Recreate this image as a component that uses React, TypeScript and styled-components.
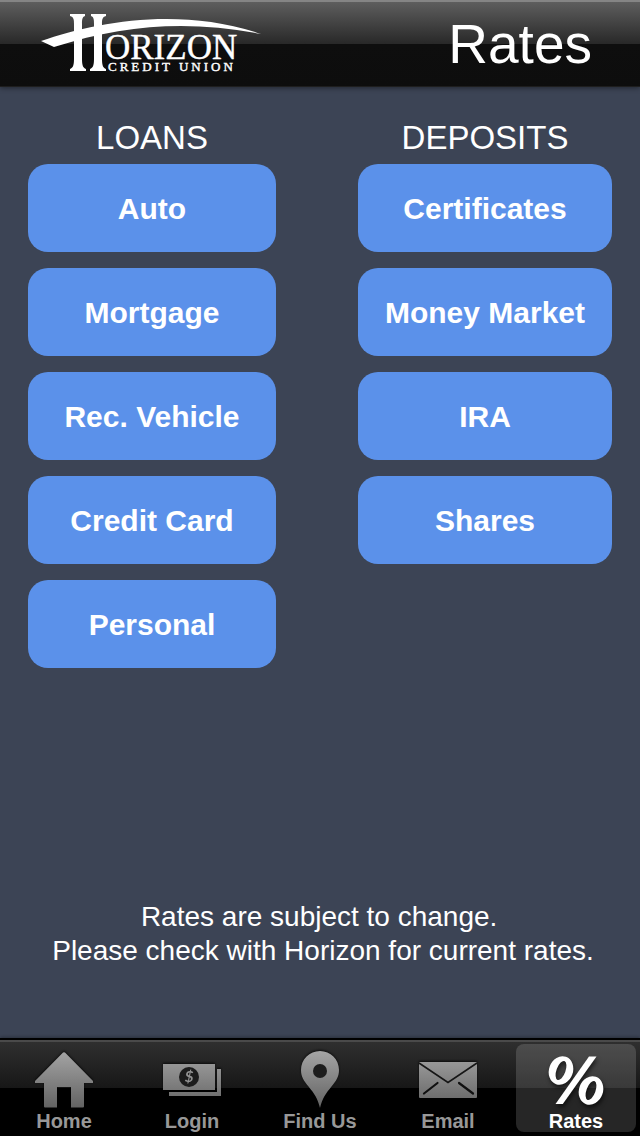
import React from 'react';
import styled, { createGlobalStyle, css } from 'styled-components';

const GlobalStyle = createGlobalStyle`
  *, *::before, *::after {
    box-sizing: border-box;
  }
  body {
    margin: 0;
    background: #3c4455;
    color: #ffffff;
    font-family: "Liberation Sans", Arial, Helvetica, sans-serif;
  }
`;

const Screen = styled.div`
  display: flex;
  flex-direction: column;
  min-height: 100vh;
`;

const Header = styled.header`
  display: flex;
  align-items: center;
  justify-content: space-between;
  height: 87px;
  padding: 0 48px 0 40px;
  border-top: 2px solid #858585;
  border-bottom: 1px solid #1e1e1e;
  background: linear-gradient(#5e5e5e 0, #282828 50%, #0e0e0e 50%, #0d0d0d 100%);
  box-shadow: 0 1px 5px rgba(0, 0, 0, 0.45);
`;

const Logo = styled.svg`
  display: block;
  width: 224px;
  height: 64px;
  fill: #ffffff;
`;

const LogoName = styled.text`
  font-family: "Liberation Serif", "Times New Roman", serif;
  font-size: 35px;
  stroke: #ffffff;
  stroke-width: 0.4;
`;

const LogoTagline = styled.text`
  font-family: "Liberation Serif", "Times New Roman", serif;
  font-size: 13px;
  letter-spacing: 3px;
  stroke: #ffffff;
  stroke-width: 0.4;
`;

const Title = styled.h1`
  margin: 0;
  font-size: 55px;
  line-height: 80px;
  font-weight: 400;
`;

const Main = styled.main`
  display: flex;
  flex: 1;
  flex-direction: column;
  justify-content: space-between;
  padding: 28px 28px 70px;
`;

const Columns = styled.div`
  display: grid;
  grid-template-columns: 248fr 254fr;
  column-gap: 82px;
  align-items: start;
`;

const Column = styled.section`
  display: flex;
  flex-direction: column;
  gap: 16px;
`;

const ColumnTitle = styled.h2`
  margin: 0 0 -12px;
  font-size: 33px;
  line-height: 45px;
  font-weight: 400;
  text-align: center;
`;

const RateButton = styled.button`
  height: 88px;
  padding: 2px 8px 0;
  border: 0;
  border-radius: 20px;
  background: #5b91ea;
  color: #ffffff;
  font-family: inherit;
  font-size: 30px;
  font-weight: 700;
  line-height: 36px;
  white-space: nowrap;
  cursor: pointer;
`;

const Note = styled.p`
  margin: 32px 0 0;
  padding-left: 6px;
  font-size: 28px;
  line-height: 34px;
  text-align: center;
`;

const TabBar = styled.nav`
  display: flex;
  height: 98px;
  border-top: 2px solid #000000;
  background: linear-gradient(#4a4a4a 0, #4a4a4a 2px, #2f2f2f 2px, #171717 48px, #000000 48px);
  box-shadow: 0 -1px 3px rgba(0, 0, 0, 0.3);
`;

const Tab = styled.a<{ $active?: boolean }>`
  display: flex;
  flex: 1 1 0;
  flex-direction: column;
  align-items: center;
  margin: 4px;
  padding-top: 6px;
  border-radius: 8px;
  color: #989898;
  font-size: 20px;
  font-weight: 700;
  line-height: 22px;
  text-decoration: none;
  white-space: nowrap;
  ${({ $active }) =>
    $active &&
    css`
      background: rgba(255, 255, 255, 0.15);
      color: #ffffff;
    `}
`;

const TabIcon = styled.svg`
  display: block;
  flex: none;
  width: 64px;
  height: 60px;
  filter: drop-shadow(0 -1px 1px rgba(0, 0, 0, 0.7));
`;

const PercentIcon = styled(TabIcon)`
  filter: drop-shadow(1px 3px 2px rgba(0, 0, 0, 0.6));
`;

const IconFill = ({ id }: { id: string }) => (
  <defs>
    <linearGradient id={id} gradientUnits="userSpaceOnUse" x1="0" y1="0" x2="0" y2="60">
      <stop offset="0" stopColor="#a6a6a6" />
      <stop offset="1" stopColor="#606060" />
    </linearGradient>
  </defs>
);

const HomeIcon = () => (
  <TabIcon viewBox="0 0 64 60" aria-hidden="true">
    <IconFill id="home-fill" />
    <path
      fill="url(#home-fill)"
      d="M31 2.600q1-.9 2 0L61 31v2H52V56.500q0 1-1 1H39V37H25V57.500H13q-1 0-1-1V33H3V31Z"
    />
  </TabIcon>
);

const LoginIcon = () => (
  <TabIcon viewBox="0 0 64 60" aria-hidden="true">
    <IconFill id="login-fill" />
    <path fill="url(#login-fill)" d="M3 14H55V40H3ZM57 19H61V46H9V42H57Z" />
    <circle cx="29" cy="27" r="10" fill="#1c1c1c" />
    <text
      x="29"
      y="32"
      textAnchor="middle"
      fill="#929292"
      fontFamily="Lato, sans-serif"
      fontSize="15"
      fontWeight="700"
      fontStyle="italic"
    >
      $
    </text>
  </TabIcon>
);

const FindIcon = () => (
  <TabIcon viewBox="0 0 64 60" aria-hidden="true">
    <IconFill id="find-fill" />
    <path
      fill="url(#find-fill)"
      d="M32 1C42.500 1 51 9.500 51 20C51 27 48 31 43.500 36.500C37.500 44 34.500 48 32 58C29.500 48 26.500 44 20.500 36.500C16 31 13 27 13 20C13 9.500 21.500 1 32 1Z"
    />
    <circle cx="32" cy="21" r="7" fill="#1d1d1d" />
  </TabIcon>
);

const EmailIcon = () => (
  <TabIcon viewBox="0 0 64 60" aria-hidden="true">
    <IconFill id="email-fill" />
    <rect x="3" y="12" width="58" height="36" rx="1" fill="url(#email-fill)" />
    <path d="M3 13L32 32.500L61 13" fill="none" stroke="#161616" strokeWidth="1.600" />
    <path
      d="M8 43.500L21.500 33M43 33L57 43.500"
      fill="none"
      stroke="#101010"
      strokeWidth="2.200"
      strokeLinecap="round"
    />
  </TabIcon>
);

const ring =
  'M-12 0A12 14.500 0 1 1 12 0A12 14.500 0 1 1-12 0ZM-4.500 0A4.500 10 0 1 0 4.500 0A4.500 10 0 1 0-4.500 0Z';

const RatesIcon = () => (
  <PercentIcon viewBox="0 0 64 60" aria-hidden="true" fill="#ffffff">
    <path d="M45 6.500H52.500L18.800 54H11.500Z" />
    <path d={ring} fillRule="evenodd" transform="translate(17 20.500) rotate(20)" />
    <path d={ring} fillRule="evenodd" transform="translate(47 40.500) rotate(20)" />
  </PercentIcon>
);

const HorizonLogo = () => (
  <Logo viewBox="0 0 224 64" role="img" aria-label="Horizon Credit Union">
    <path d="M1 29C55 10 140-6 221 22C150 8 85 12 14 35Z" />
    <path d="M30 2H45V4C42 5 42 8 42 12V47C42 53 43 56 46 57V59H30V57C33 56 34 53 34 47V12C34 8 34 5 30 4Z" />
    <path d="M51 2H66V4C62 5 62 8 62 12V47C62 53 63 56 66 57V59H50V57C53 56 54 53 54 47V12C54 8 54 5 51 4Z" />
    <LogoName x="65" y="47">ORIZON</LogoName>
    <LogoTagline x="68" y="59">CREDIT UNION</LogoTagline>
  </Logo>
);

const groups = [
  { id: 'loans', title: 'LOANS', items: ['Auto', 'Mortgage', 'Rec. Vehicle', 'Credit Card', 'Personal'] },
  { id: 'deposits', title: 'DEPOSITS', items: ['Certificates', 'Money Market', 'IRA', 'Shares'] },
];

const tabs = [
  { label: 'Home', href: '#home', Icon: HomeIcon },
  { label: 'Login', href: '#login', Icon: LoginIcon },
  { label: 'Find Us', href: '#find-us', Icon: FindIcon },
  { label: 'Email', href: '#email', Icon: EmailIcon },
  { label: 'Rates', href: '#rates', Icon: RatesIcon, active: true },
];

export default function App() {
  return (
    <Screen>
      <GlobalStyle />
      <Header>
        <HorizonLogo />
        <Title>Rates</Title>
      </Header>
      <Main>
        <Columns>
          {groups.map((group) => (
            <Column key={group.id} aria-labelledby={group.id}>
              <ColumnTitle id={group.id}>{group.title}</ColumnTitle>
              {group.items.map((item) => (
                <RateButton key={item} type="button">
                  {item}
                </RateButton>
              ))}
            </Column>
          ))}
        </Columns>
        <Note>
          Rates are subject to change.&nbsp;
          <br />
          Please check with Horizon for current rates.
        </Note>
      </Main>
      <TabBar aria-label="Main">
        {tabs.map(({ label, href, Icon, active }) => (
          <Tab key={label} href={href} $active={active} aria-current={active ? 'page' : undefined}>
            <Icon />
            {label}
          </Tab>
        ))}
      </TabBar>
    </Screen>
  );
}
